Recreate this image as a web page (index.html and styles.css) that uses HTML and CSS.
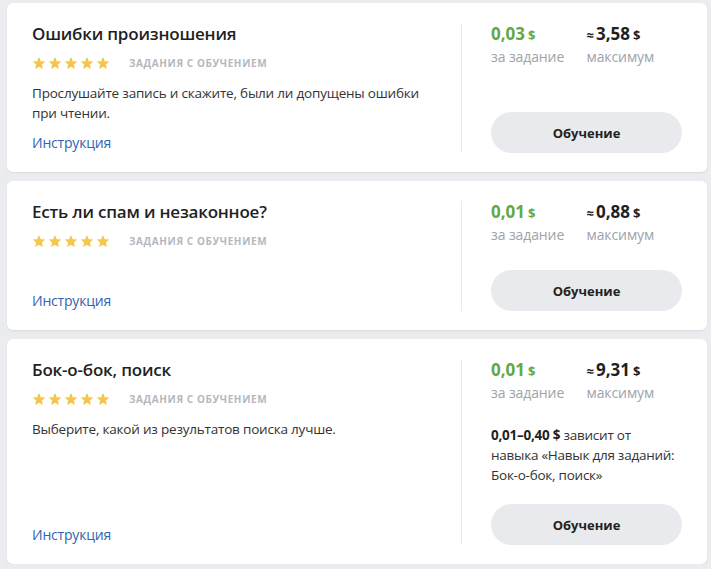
FILE: index.html
```html
<!DOCTYPE html>
<html>
<head>
    <meta charset="utf-8">
    <title>Задания</title>
    <link rel="stylesheet" href="styles.css">
</head>
<body>
    <svg width="0" height="0" class="defs">
        <symbol id="star" viewBox="0 0 24 24">
            <path d="M12 1.8l3.1 7.1 7.7.7-5.8 5.1 1.7 7.5L12 18.3l-6.7 3.9L7 14.7 1.2 9.6l7.7-.7z"/>
        </symbol>
    </svg>

    <div class="list">
        <div class="card">
            <div class="card-main">
                <h2 class="title">Ошибки произношения</h2>
                <div class="meta">
                    <span class="stars">
                        <svg><use href="#star"/></svg><svg><use href="#star"/></svg><svg><use href="#star"/></svg><svg><use href="#star"/></svg><svg><use href="#star"/></svg>
                    </span>
                    <span class="tag">Задания с обучением</span>
                </div>
                <p class="desc">Прослушайте запись и скажите, были ли допущены ошибки при чтении.</p>
                <a class="link" href="#">Инструкция</a>
            </div>
            <div class="card-side">
                <div class="prices">
                    <div class="price">
                        <div class="sum green">0,03<span class="cur">$</span></div>
                        <div class="hint">за задание</div>
                    </div>
                    <div class="price">
                        <div class="sum"><span class="approx">≈</span>3,58<span class="cur">$</span></div>
                        <div class="hint">максимум</div>
                    </div>
                </div>
                <button class="btn">Обучение</button>
            </div>
        </div>

        <div class="card">
            <div class="card-main">
                <h2 class="title">Есть ли спам и незаконное?</h2>
                <div class="meta">
                    <span class="stars">
                        <svg><use href="#star"/></svg><svg><use href="#star"/></svg><svg><use href="#star"/></svg><svg><use href="#star"/></svg><svg><use href="#star"/></svg>
                    </span>
                    <span class="tag">Задания с обучением</span>
                </div>
                <a class="link" href="#">Инструкция</a>
            </div>
            <div class="card-side">
                <div class="prices">
                    <div class="price">
                        <div class="sum green">0,01<span class="cur">$</span></div>
                        <div class="hint">за задание</div>
                    </div>
                    <div class="price">
                        <div class="sum"><span class="approx">≈</span>0,88<span class="cur">$</span></div>
                        <div class="hint">максимум</div>
                    </div>
                </div>
                <button class="btn">Обучение</button>
            </div>
        </div>

        <div class="card">
            <div class="card-main">
                <h2 class="title">Бок-о-бок, поиск</h2>
                <div class="meta">
                    <span class="stars">
                        <svg><use href="#star"/></svg><svg><use href="#star"/></svg><svg><use href="#star"/></svg><svg><use href="#star"/></svg><svg><use href="#star"/></svg>
                    </span>
                    <span class="tag">Задания с обучением</span>
                </div>
                <p class="desc">Выберите, какой из результатов поиска лучше.</p>
                <a class="link" href="#">Инструкция</a>
            </div>
            <div class="card-side">
                <div class="prices">
                    <div class="price">
                        <div class="sum green">0,01<span class="cur">$</span></div>
                        <div class="hint">за задание</div>
                    </div>
                    <div class="price">
                        <div class="sum"><span class="approx">≈</span>9,31<span class="cur">$</span></div>
                        <div class="hint">максимум</div>
                    </div>
                </div>
                <p class="note"><b>0,01–0,40 $</b> зависит от <span class="skill">навыка «Навык для заданий: <span class="nowrap">Бок-о-бок,</span> поиск»</span></p>
                <button class="btn">Обучение</button>
            </div>
        </div>
    </div>
</body>
</html>
```

FILE: styles.css
```css
body {
    margin: 0;
    background-color: #eaecef;
    font-family: "Open Sans", Arial, sans-serif;
    color: #222;
}

.defs {
    position: absolute;
}

.list {
    display: flex;
    flex-direction: column;
    gap: 9px;
    padding: 3px 4px 0 7px;
}

.card {
    display: flex;
    padding: 20px 25px 19px;
    background-color: #fff;
    border-radius: 6px;
    box-shadow: 0 1px 2px rgba(0, 0, 0, 0.08);
}

/* left part: title, rating, description */
.card-main {
    flex: 1;
    display: flex;
    flex-direction: column;
    min-height: 110px;
    padding-right: 30px;
}

.title {
    margin: 0;
    font-size: 17px;
    line-height: 22px;
    font-weight: 600;
    letter-spacing: -0.2px;
    color: #1f1f1f;
}

.meta {
    display: flex;
    align-items: center;
    height: 16px;
    margin-top: 10px;
}

.stars {
    display: flex;
    gap: 2px;
}

.stars svg {
    width: 14px;
    height: 14px;
    fill: #f2c74c;
}

.tag {
    margin-left: 19px;
    font-size: 10px;
    font-weight: 700;
    letter-spacing: 0.6px;
    text-transform: uppercase;
    color: #b3b8bf;
}

.desc {
    margin: 12px 0 0;
    font-size: 13.5px;
    line-height: 20px;
    letter-spacing: -0.2px;
    color: #333;
}

.link {
    margin-top: auto;
    padding-top: 9px;
    font-size: 14px;
    line-height: 21px;
    letter-spacing: -0.2px;
    color: #2f62b4;
    text-decoration: none;
}

/* right part: payment and button */
.card-side {
    width: 191px;
    display: flex;
    flex-direction: column;
    padding-left: 29px;
    border-left: 1px solid #ebebeb;
}

.prices {
    display: flex;
    margin-bottom: 21px;
}

.price {
    width: 96px;
}

.sum {
    font-size: 17px;
    line-height: 22px;
    font-weight: 700;
    color: #1f1f1f;
}

.sum.green {
    color: #65a843;
}

.cur {
    margin-left: 3px;
    font-size: 13px;
}

.approx {
    margin-right: 2px;
    font-size: 13px;
}

.hint {
    font-size: 14px;
    line-height: 22px;
    letter-spacing: -0.1px;
    color: #9ea3aa;
}

.note {
    margin: 0 0 19px;
    font-size: 13.5px;
    line-height: 20px;
    letter-spacing: -0.25px;
    color: #333;
}

.note b {
    color: #1f1f1f;
}

.skill {
    display: inline-block;
}

.nowrap {
    white-space: nowrap;
}

.btn {
    margin-top: auto;
    height: 41px;
    border: none;
    border-radius: 21px;
    background-color: #e8eaed;
    font-family: inherit;
    font-size: 13px;
    font-weight: 700;
    color: #222;
    cursor: pointer;
}
```
